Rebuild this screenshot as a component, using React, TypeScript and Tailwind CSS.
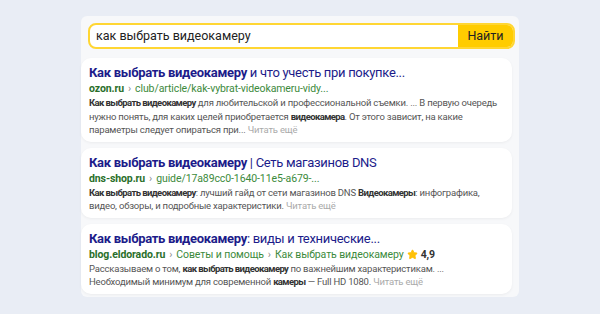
import { Star } from 'lucide-react'

type Result = {
  title: string
  titleRest: string
  domain: string
  path: string[]
  rating?: string
  snippet: React.ReactNode
}

const B = ({ children }: { children: React.ReactNode }) => (
  <b className="text-[#333] tracking-[-0.6px]">{children}</b>
)

const RESULTS: Result[] = [
  {
    title: 'Как выбрать видеокамеру',
    titleRest: ' и что учесть при покупке...',
    domain: 'ozon.ru',
    path: ['club/article/kak-vybrat-videokameru-vidy...'],
    snippet: (
      <>
        <B>Как выбрать видеокамеру</B> для любительской и профессиональной съемки. ... В первую очередь нужно понять, для каких целей приобретается <B>видеокамера</B>. От этого зависит, на какие параметры следует опираться при...
      </>
    ),
  },
  {
    title: 'Как выбрать видеокамеру',
    titleRest: ' | Сеть магазинов DNS',
    domain: 'dns-shop.ru',
    path: ['guide/17a89cc0-1640-11e5-a679-...'],
    snippet: (
      <>
        <B>Как выбрать видеокамеру</B>: лучший гайд от сети магазинов DNS <B>Видеокамеры</B>: инфографика, видео, обзоры, и подробные характеристики.
      </>
    ),
  },
  {
    title: 'Как выбрать видеокамеру',
    titleRest: ': виды и технические...',
    domain: 'blog.eldorado.ru',
    path: ['Советы и помощь', 'Как выбрать видеокамеру'],
    rating: '4,9',
    snippet: (
      <>
        Рассказываем о том, <B>как выбрать видеокамеру</B> по важнейшим характеристикам. ... Необходимый минимум для современной <B>камеры</B> — Full HD 1080.
      </>
    ),
  },
]

function ResultCard({ r }: { r: Result }) {
  return (
    <div className="bg-white rounded-[10px] shadow-[0_1px_3px_rgba(0,0,0,0.05)] pl-2 pr-3 pt-[7px] pb-[5px]">
      <div className="text-[13px] leading-[16px] tracking-[-0.3px] text-[#1c1c8a]">
        <span className="font-bold">{r.title}</span>
        {r.titleRest}
      </div>
      <div className="flex items-center text-[10.5px] leading-[14px] tracking-[-0.1px] text-[#3c8a3c] mt-[1px]">
        <span className="font-bold text-[#2a6f2a]">{r.domain}</span>
        {r.path.map((p, i) => (
          <span key={i} className="flex items-center">
            <span className="text-[#8a8a8a] mx-[4px]">›</span>
            {p}
          </span>
        ))}
        {r.rating && (
          <span className="flex items-center ml-[3px] text-[#333] font-bold">
            <Star size={11} className="fill-[#ffc107] text-[#ffc107] mr-[3px]" />
            {r.rating}
          </span>
        )}
      </div>
      <p className="text-[9.5px] leading-[13.5px] tracking-[-0.2px] text-[#555]">
        {r.snippet} <span className="text-[#aaa]">Читать ещё</span>
      </p>
    </div>
  )
}

export default function App() {
  return (
    <div
      className="w-[600px] h-[314px] bg-[#e9edf5] pt-4 pl-[81px]"
      style={{ fontFamily: 'Roboto, "Liberation Sans", Arial, sans-serif' }}
    >
      <div className="w-[438px] h-[281px] bg-[#f7f8fa] rounded-[6px] pr-[7px]">
        <div className="pl-[7px] pt-[7px] pb-[9px]">
          <div className="flex h-[26px] border-2 border-[#ffd633] rounded-[8px] overflow-hidden bg-white -mr-[3px]">
            <div className="flex-1 flex items-center pl-[6px] text-[12.5px] text-[#222]">
              как выбрать видеокамеру
            </div>
            <div className="w-[55px] bg-[#ffcc00] flex items-center justify-center text-[12.5px] text-[#222]">
              Найти
            </div>
          </div>
        </div>
        <div className="flex flex-col gap-[6px]">
          {RESULTS.map((r, i) => (
            <ResultCard key={i} r={r} />
          ))}
        </div>
      </div>
    </div>
  )
}
